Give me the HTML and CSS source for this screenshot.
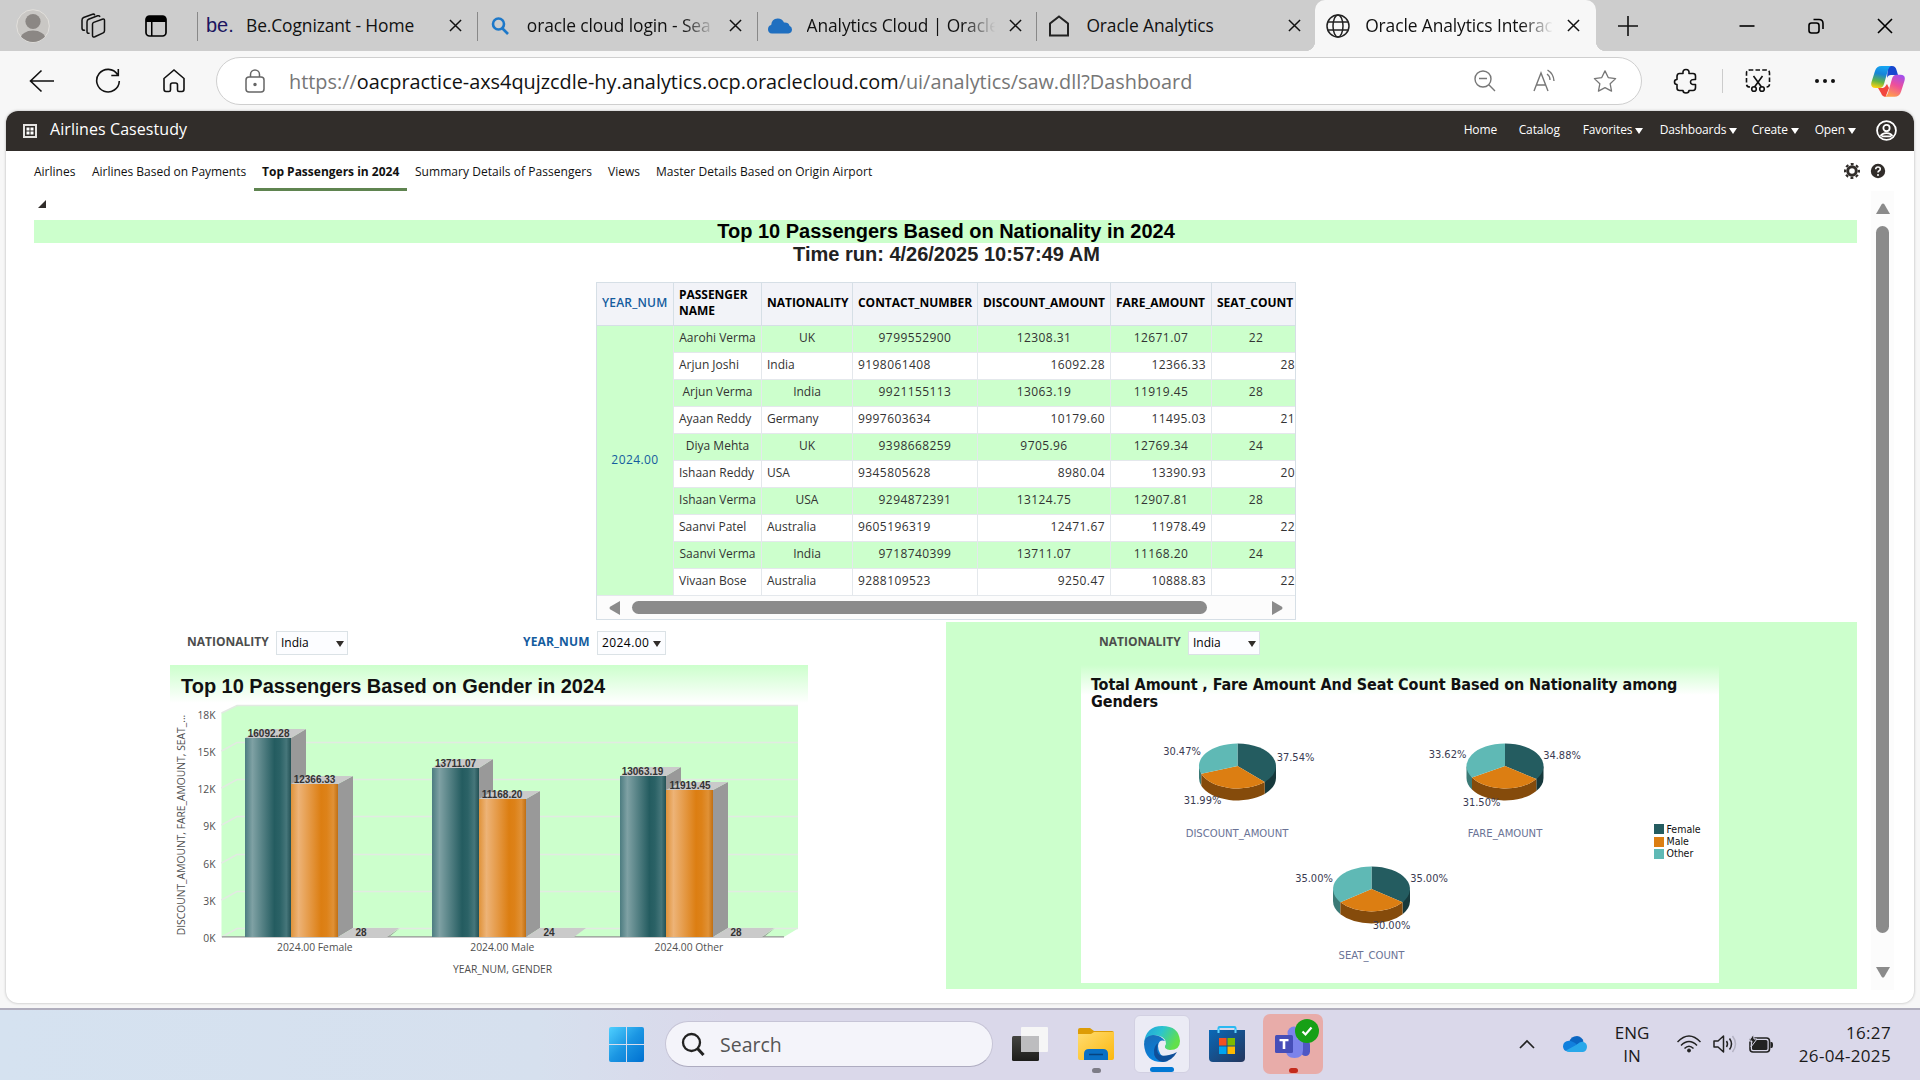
FILE: index.html
```html
<!DOCTYPE html>
<html lang="en">
<head>
<meta charset="utf-8">
<title>Oracle Analytics Interactive Dashboards</title>
<link rel="stylesheet" href="styles.css">
</head>
<body>
<header class="tabstrip">
  <div class="strip-tools">
    <svg class="avatar" viewBox="0 0 34 34"><defs><clipPath id="av"><circle cx="17" cy="17" r="16"/></clipPath></defs><circle cx="17" cy="17" r="16.3" fill="#c9c7c4" stroke="#e2e0dc"/><g clip-path="url(#av)" fill="#8b8784"><circle cx="17" cy="12.5" r="7.6"/><ellipse cx="17" cy="30" rx="12.5" ry="8.5"/></g></svg>
    <svg class="workspaces" viewBox="0 0 26 26" fill="none" stroke="#111" stroke-width="1.5" stroke-linejoin="round" stroke-linecap="round"><path d="M12.5 11.2q0-1.3 1.2-1.8l8.6-3.2q2.2-.6 2.2 1.3v10.3q0 1.5-1.3 2.1l-8.3 3.9q-2.4.9-2.4-1.3zM9 20.3q-2 .2-2-1.9V9q0-2 1.6-2.7l9-3.5q1.600-.5 2.100.6M4.500 17.300q-2.500 0-2.500-2.100V7.200q0-2 1.600-2.700l9-3.200q1.500-.5 2 .5"/></svg>
    <svg class="vtabs" viewBox="0 0 24 24"><rect x="2" y="2" width="20" height="20" rx="3.500" fill="none" stroke="#000" stroke-width="1.700"/><path d="M2 8V5q0-3 3-3h14q3 0 3 3v3zM7 7h1.500v15H7z"/></svg>
  </div>
  <nav class="tabs">
    <div class="tab"><span class="fav be">be.</span><span class="tab-title">Be.Cognizant - Home</span><svg class="x" viewBox="0 0 14 14"><path d="M1 1l12 12M13 1L1 13"/></svg></div>
    <div class="tab"><svg class="fav" viewBox="0 0 24 24" fill="none" stroke="#1d78c9" stroke-width="2.600"><circle cx="10.500" cy="10" r="5.500"/><path d="M14.500 14.500l5.500 5.500"/></svg><span class="tab-title fade">oracle cloud login - Sea</span><svg class="x" viewBox="0 0 14 14"><path d="M1 1l12 12M13 1L1 13"/></svg></div>
    <div class="tab"><svg class="fav" viewBox="0 0 24 24" fill="#1f6fc0"><path d="M4 19.500q-4-.4-4-4.300 0-3.700 3.200-4.300.5-5.900 6.300-6.400 4.500-.2 6.500 4 4.500-.4 5.500 3.200 2.500 1 2.500 3.900 0 3.600-3.600 3.900z"/></svg><span class="tab-title fade">Analytics Cloud | Oracle</span><svg class="x" viewBox="0 0 14 14"><path d="M1 1l12 12M13 1L1 13"/></svg></div>
    <div class="tab"><svg class="fav" viewBox="0 0 24 24" fill="none" stroke="#222" stroke-width="2"><path d="M3 21.500V9.500L12 2.500l9 7v12z"/></svg><span class="tab-title">Oracle Analytics</span><svg class="x" viewBox="0 0 14 14"><path d="M1 1l12 12M13 1L1 13"/></svg></div>
    <div class="tab active"><svg class="fav" viewBox="0 0 24 24" fill="none" stroke="#222" stroke-width="1.500"><circle cx="12" cy="12" r="11"/><ellipse cx="12" cy="12" rx="5" ry="11"/><path d="M2 8h20M2 16h20"/></svg><span class="tab-title fade">Oracle Analytics Interact</span><svg class="x" viewBox="0 0 14 14"><path d="M1 1l12 12M13 1L1 13"/></svg></div>
  </nav>
  <svg class="plus" viewBox="0 0 22 22"><path d="M11 1v20M1 11h20" stroke="#111" stroke-width="1.600"/></svg>
  <div class="winctl">
    <svg viewBox="0 0 16 16"><path d="M.500 8h15"/></svg>
    <svg viewBox="0 0 16 16"><rect x="1" y="5" width="10" height="10" rx="2.500"/><path d="M5.500 1.500h5.500q4 0 4 4V11"/></svg>
    <svg viewBox="0 0 16 16"><path d="M1 1l14 14M15 1L1 15"/></svg>
  </div>
</header>

<div class="toolbar">
  <div class="nav-buttons">
    <svg viewBox="0 0 26 26"><path d="M25 13H1.500M12.500 2.500L1.500 13l11 10.500"/></svg>
    <svg viewBox="0 0 26 26"><path d="M22.500 6.500A11.300 11.300 0 1 0 24.300 13M23.300 1v6.500h-7"/></svg>
    <svg viewBox="0 0 26 26"><path d="M3 10.500L13 2l10 8.500V21q0 2.500-2 2.500h-3q-1.500 0-1.500-1.500v-5q0-2-2-2h-3q-2 0-2 2v5q0 1.500-1.500 1.500H5q-2 0-2-2.500z"/></svg>
  </div>
  <div class="urlbar">
    <svg class="lock" viewBox="0 0 20 24"><rect x="1" y="8" width="18" height="15" rx="3"/><path d="M5.500 8V5.500a4.500 4.500 0 0 1 9 0V8"/><circle cx="10" cy="15.500" r="1" fill="#666"/></svg>
    <span class="url">https://<b>oacpractice-axs4qujzcdle-hy.analytics.ocp.oraclecloud.com</b>/ui/analytics/saw.dll?Dashboard</span>
    <div class="url-icons">
      <svg viewBox="0 0 24 24"><circle cx="10" cy="10" r="8"/><path d="M6 9.500h8M15.800 15.800L22 22"/></svg>
      <svg viewBox="0 0 24 24"><path d="M1 22L8 4l7 18M3.500 16h9M14 5q3 2 3 6M14.500 1q6 3.500 6.500 11"/></svg>
      <svg viewBox="0 0 26 26"><path stroke-linejoin="round" d="M13 2l3.500 7.300 8 1.100-5.900 5.600 1.500 8L13 20.200 5.900 24l1.500-8-5.900-5.600 8-1.100z"/></svg>
    </div>
  </div>
  <div class="ext">
    <svg viewBox="0 0 26 26"><path stroke-linejoin="round" d="M4 8.500q0-3 2.500-3H10q-.5-4 3-4t3 4h4q2.500 0 2.500 2.500v3.500q-5-.5-5 2.500t5 2.500v3q0 3-2.500 3h-4q0 2.500-3 2.500t-3-2.500H6.500Q4 22.500 4 20v-3.500q-2.500 0-2.500-2.500T4 11.500z"/></svg>
    <i class="sep"></i>
    <svg viewBox="0 0 26 26"><path stroke-dasharray="4.500 2.200" d="M5 19q-3.500 0-3.500-3V5Q1.500 2 5 2h16q3.500 0 3.500 3v11q0 3-3.500 3"/><path d="M8.500 8l8 11M17.500 8l-8 11"/><circle cx="9" cy="21" r="2.300"/><circle cx="17" cy="21" r="2.300"/></svg>
    <svg class="dots" viewBox="0 0 26 26"><circle cx="5" cy="13" r="2"/><circle cx="13" cy="13" r="2"/><circle cx="21" cy="13" r="2"/></svg>
    <svg class="copilot" viewBox="0 0 34 31"><defs><linearGradient id="c1" x1=".5" y1="0" x2=".3" y2="1"><stop offset="0" stop-color="#16a5f2"/><stop offset=".35" stop-color="#1684d8"/><stop offset=".7" stop-color="#62b546"/><stop offset="1" stop-color="#ffd110"/></linearGradient><linearGradient id="c2" x1=".8" y1="0" x2=".4" y2="1"><stop offset="0" stop-color="#a04ff0"/><stop offset=".5" stop-color="#ee4f9b"/><stop offset="1" stop-color="#ff9a4f"/></linearGradient></defs><path fill="#1747cf" d="M17 0h4q3.500 0 4.500 4l1.500 5h-7q-3 0-4 3z"/><path fill="#f2463d" d="M7 22h5q2.500-1 4-4l2 4-3.500 9q-3.500-.5-4.500-4z"/><path fill="url(#c1)" d="M10.500 0H20q-2 .8-3 4l-4 14q-1.200 4-4.500 4H4.500Q-1 22 .5 16L4 5Q5.500 0 10.500 0z"/><path fill="url(#c2)" d="M23.500 30.700H14q2.200-.8 3-4l4-14q1.200-4 4.500-4h4q5.500 0 4 6L30 25.700q-1.500 5-6.500 5z"/></svg>
  </div>
</div>

<main class="page">
  <div class="oa-header">
    <svg class="oa-grid" viewBox="0 0 14 14"><path fill="#e6e4e2" fill-rule="evenodd" d="M0 0h14v14H0zM2 2v10h10V2z"/><path fill="#fff" d="M3.500 3.500h3v3h-3zM7.500 3.500h3v3h-3zM3.500 7.500h3v3h-3zM7.500 7.500h3v3h-3z"/></svg>
    <span class="oa-title">Airlines Casestudy</span>
    <nav class="oa-menu"><span class="m-home">Home</span><span class="m-cat">Catalog</span><span class="m-fav">Favorites<i></i></span><span class="m-dash">Dashboards<i></i></span><span class="m-cre">Create<i></i></span><span>Open<i></i></span></nav>
    <svg class="oa-user" viewBox="0 0 20 20" fill="none" stroke="#fff" stroke-width="1.700"><circle cx="10" cy="10" r="9"/><circle cx="10" cy="7.700" r="3"/><path d="M4.500 15.500q1-3 5.500-3t5.500 3M5.500 15.500h9"/></svg>
  </div>
  <div class="dash-tabs">
    <span class="d1">Airlines</span><span class="d2">Airlines Based on Payments</span><span class="d3 current">Top Passengers in 2024</span><span class="d4">Summary Details of Passengers</span><span class="d5">Views</span><span class="d6">Master Details Based on Origin Airport</span>
    <div class="dash-tools">
      <svg viewBox="0 0 16 16"><circle cx="8" cy="8" r="4.300" fill="none" stroke="#312d2a" stroke-width="3"/><circle cx="8" cy="8" r="6.900" fill="none" stroke="#312d2a" stroke-width="2.200" stroke-dasharray="2.900 2.519" stroke-dashoffset="1.450"/></svg>
      <svg viewBox="0 0 16 16"><circle cx="8" cy="8" r="7.200" fill="#312d2a"/><path d="M5.700 6.200q.1-2.200 2.300-2.200t2.300 2q0 1.200-1.200 1.800Q8 8.400 8 9.600" fill="none" stroke="#fff" stroke-width="1.600"/><circle cx="8" cy="12" r="1" fill="#fff"/></svg>
    </div>
  </div>
  <div class="dash-body">
    <div class="canvas">
      <div class="collapse"><svg viewBox="0 0 8 8"><path d="M8 0v8H0z" fill="#312d2a"/></svg></div>
      <h1 class="band">Top 10 Passengers Based on Nationality in 2024</h1>
      <p class="timerun">Time run: 4/26/2025 10:57:49 AM</p>
      <div class="grid-view">
        <table>
          <colgroup><col class="c1"><col class="c2"><col class="c3"><col class="c4"><col class="c5"><col class="c6"><col class="c7"></colgroup>
          <thead><tr><th class="yr">YEAR_NUM</th><th>PASSENGER NAME</th><th>NATIONALITY</th><th>CONTACT_NUMBER</th><th>DISCOUNT_AMOUNT</th><th>FARE_AMOUNT</th><th>SEAT_COUNT</th></tr></thead>
          <tbody>
            <tr><td class="yr" rowspan="10">2024.00</td><td>Aarohi Verma</td><td>UK</td><td>9799552900</td><td>12308.31</td><td>12671.07</td><td>22</td></tr>
            <tr><td>Arjun Joshi</td><td>India</td><td>9198061408</td><td>16092.28</td><td>12366.33</td><td>28</td></tr>
            <tr><td>Arjun Verma</td><td>India</td><td>9921155113</td><td>13063.19</td><td>11919.45</td><td>28</td></tr>
            <tr><td>Ayaan Reddy</td><td>Germany</td><td>9997603634</td><td>10179.60</td><td>11495.03</td><td>21</td></tr>
            <tr><td>Diya Mehta</td><td>UK</td><td>9398668259</td><td>9705.96</td><td>12769.34</td><td>24</td></tr>
            <tr><td>Ishaan Reddy</td><td>USA</td><td>9345805628</td><td>8980.04</td><td>13390.93</td><td>20</td></tr>
            <tr><td>Ishaan Verma</td><td>USA</td><td>9294872391</td><td>13124.75</td><td>12907.81</td><td>28</td></tr>
            <tr><td>Saanvi Patel</td><td>Australia</td><td>9605196319</td><td>12471.67</td><td>11978.49</td><td>22</td></tr>
            <tr><td>Saanvi Verma</td><td>India</td><td>9718740399</td><td>13711.07</td><td>11168.20</td><td>24</td></tr>
            <tr><td>Vivaan Bose</td><td>Australia</td><td>9288109523</td><td>9250.47</td><td>10888.83</td><td>22</td></tr>
          </tbody>
        </table>
        <div class="hscroll"><svg viewBox="0 0 12 14"><path d="M11 0v14L1 8.200Q0 7 1 5.800z"/></svg><i class="hthumb"></i><svg viewBox="0 0 12 14"><path d="M1 0v14l10-5.800Q12 7 11 5.800z"/></svg></div>
      </div>
      <div class="charts">
        <section class="left-view">
          <div class="prompts">
            <span class="lbl">NATIONALITY</span><span class="sel nat">India<i></i></span>
            <span class="lbl year">YEAR_NUM</span><span class="sel num">2024.00<i></i></span>
          </div>
          <div class="bar-chart">
            <h2>Top 10 Passengers Based on Gender in 2024</h2>
            <svg class="bars" viewBox="170 700 638 285">
              <defs>
                <linearGradient id="teal"><stop offset="0" stop-color="#4c7c80"/><stop offset=".16" stop-color="#7fa1a4"/><stop offset=".64" stop-color="#245c60"/><stop offset=".76" stop-color="#2b6266"/><stop offset=".9" stop-color="#46767a"/><stop offset="1" stop-color="#235155"/></linearGradient>
                <linearGradient id="orange"><stop offset="0" stop-color="#e0933a"/><stop offset=".16" stop-color="#edb377"/><stop offset=".64" stop-color="#dc7e12"/><stop offset=".76" stop-color="#dd8219"/><stop offset=".9" stop-color="#e09136"/><stop offset="1" stop-color="#c06f12"/></linearGradient>
              </defs>
              <path fill="#ccffcc" d="M221.500 713L237 705.500H798V928.500L784 937H221.500z"/>
              <g fill="none" stroke="#e2eae2" stroke-width="1.500"><path d="M221.500 713L237 705.500H798"/><path d="M221.500 751L237 742.500H798M221.500 788L237 779.500H798M221.500 825L237 816.500H798M221.500 863L237 854.500H798M221.500 900L237 891.500H798M221.500 937L237 928.500H798"/></g>
              <path stroke="#949494" stroke-width="1.300" d="M222 936.800h562"/>
              <g fill="#999">
                <path d="M291 738l15-9v198l-15 10zM338 784l15-8v152l-15 9zM479 768l14-9v168l-14 10zM526 799l14-8v137l-14 9zM666 776l15-9v160l-15 10zM713 790l15-8v146l-15 9z"/>
                <path d="M387 937l13-9-11 9zM762 937l13-9-11 9z"/>
              </g>
              <g fill="#cacaca">
                <path d="M245 738l15-9h46l-15 9zM291 784l15-8h47l-15 8zM432 768l14-9h47l-14 9zM479 799l14-8h47l-14 8zM620 776l15-9h46l-15 9zM666 790l15-8h47l-15 8z"/>
                <path d="M338 937l15-9h46l-12 9zM526 937l14-9h46l-12 9zM713 937l15-9h46l-12 9z"/>
              </g>
              <g fill="url(#teal)"><rect x="245" y="738" width="46" height="199"/><rect x="432" y="768" width="47" height="169"/><rect x="620" y="776" width="46" height="161"/></g>
              <g fill="url(#orange)"><rect x="291" y="784" width="47" height="153"/><rect x="479" y="799" width="47" height="138"/><rect x="666" y="790" width="47" height="147"/></g>
              <g class="val"><text x="268.600" y="736.500">16092.28</text><text x="314.500" y="782.500">12366.33</text><text x="361" y="935.500">28</text><text x="455.500" y="766.500">13711.07</text><text x="502" y="797.500">11168.20</text><text x="549" y="935.500">24</text><text x="642.500" y="774.500">13063.19</text><text x="690" y="788.500">11919.45</text><text x="736" y="935.500">28</text></g>
              <g class="ytick"><text x="215.500" y="718.500">18K</text><text x="215.500" y="755.500">15K</text><text x="215.500" y="792.500">12K</text><text x="215.500" y="829.500">9K</text><text x="215.500" y="867.500">6K</text><text x="215.500" y="904.500">3K</text><text x="215.500" y="941.500">0K</text></g>
              <g class="xtick"><text x="314.800" y="951">2024.00 Female</text><text x="502.300" y="951">2024.00 Male</text><text x="688.900" y="951">2024.00 Other</text><text x="502.600" y="972.500">YEAR_NUM, GENDER</text><text class="ytitle" transform="translate(185 825) rotate(-90)">DISCOUNT_AMOUNT, FARE_AMOUNT, SEAT_...</text></g>
            </svg>
          </div>
        </section>
        <section class="right-view">
          <div class="prompts"><span class="lbl">NATIONALITY</span><span class="sel nat">India<i></i></span></div>
          <div class="pie-chart">
            <h2>Total Amount , Fare Amount And Seat Count Based on Nationality among Genders</h2>
            <svg class="pies" viewBox="1081 720 637 263">
              <!-- Slice edges follow the share of each gender, clockwise from the top -->
              <g transform="translate(1237.500 766)">
                <path fill="#3b7a76" d="M-38.500 0V12A38.500 22.500 0 0 0 -36.200 19.700V7.700z"/><path fill="#17393c" d="M38.500 0V12A38.500 22.500 0 0 1 27.200 27.900V15.900z"/><path fill="#854b0b" d="M-36.200 7.700A38.500 22.500 0 0 0 27.200 15.900V27.900A38.500 22.500 0 0 1 -36.200 19.700z"/>
                <path fill="#245c60" d="M0 0V-22.500A38.500 22.500 0 0 1 27.200 15.900z"/><path fill="#dc7e12" d="M0 0L27.200 15.900A38.500 22.500 0 0 1 -36.200 7.700z"/><path fill="#5fb9b5" d="M0 0L-36.200 7.700A38.500 22.500 0 0 1 0 -22.500z"/>
              </g>
              <g transform="translate(1505 766)">
                <path fill="#3b7a76" d="M-38.500 0V12A38.500 22.500 0 0 0 -33 23.600V11.600z"/><path fill="#17393c" d="M38.500 0V12A38.500 22.500 0 0 1 31.300 25.100V13.100z"/><path fill="#854b0b" d="M-33 11.600A38.500 22.500 0 0 0 31.300 13.100V25.100A38.500 22.500 0 0 1 -33 23.600z"/>
                <path fill="#245c60" d="M0 0V-22.500A38.500 22.500 0 0 1 31.300 13.100z"/><path fill="#dc7e12" d="M0 0L31.300 13.100A38.500 22.500 0 0 1 -33 11.600z"/><path fill="#5fb9b5" d="M0 0L-33 11.600A38.500 22.500 0 0 1 0 -22.500z"/>
              </g>
              <g transform="translate(1371.500 889)">
                <path fill="#3b7a76" d="M-38.500 0V12A38.500 22.500 0 0 0 -31.100 25.200V13.200z"/><path fill="#17393c" d="M38.500 0V12A38.500 22.500 0 0 1 31.100 25.200V13.200z"/><path fill="#854b0b" d="M-31.100 13.200A38.500 22.500 0 0 0 31.100 13.200V25.200A38.500 22.500 0 0 1 -31.100 25.200z"/>
                <path fill="#245c60" d="M0 0V-22.500A38.500 22.500 0 0 1 31.100 13.200z"/><path fill="#dc7e12" d="M0 0L31.100 13.200A38.500 22.500 0 0 1 -31.100 13.200z"/><path fill="#5fb9b5" d="M0 0L-31.100 13.200A38.500 22.500 0 0 1 0 -22.500z"/>
              </g>
              <g class="pct"><text x="1182" y="755">30.47%</text><text x="1295.500" y="761">37.54%</text><text x="1202.500" y="804">31.99%</text><text x="1447.500" y="758">33.62%</text><text x="1562" y="759">34.88%</text><text x="1481.500" y="806">31.50%</text><text x="1314" y="882">35.00%</text><text x="1429" y="882">35.00%</text><text x="1391.500" y="929">30.00%</text></g>
              <g class="pname"><text x="1237" y="837">DISCOUNT_AMOUNT</text><text x="1505" y="837">FARE_AMOUNT</text><text x="1371.500" y="959">SEAT_COUNT</text></g>
              <path fill="#245c60" d="M1654 824h10v10h-10z"/><path fill="#dc7e12" d="M1654 837h10v10h-10z"/><path fill="#5fb9b5" d="M1654 849h10v10h-10z"/>
              <g class="leg"><text x="1666.500" y="833">Female</text><text x="1666.500" y="845">Male</text><text x="1666.500" y="857">Other</text></g>
            </svg>
          </div>
        </section>
      </div>
    </div>
    <div class="vscroll"><svg viewBox="0 0 14 12"><path d="M0 11h14L8.200 1Q7 0 5.800 1z"/></svg><i class="vthumb"></i><svg viewBox="0 0 14 12"><path d="M0 1h14L8.200 11Q7 12 5.800 11z"/></svg></div>
  </div>
</main>

<footer class="taskbar">
  <svg class="start" viewBox="0 0 35 35"><defs><linearGradient id="w" x1="0" y1="0" x2="1" y2="1"><stop offset="0" stop-color="#4fd0ff"/><stop offset=".5" stop-color="#1b96e3"/><stop offset="1" stop-color="#0070d0"/></linearGradient></defs><path fill="url(#w)" d="M2 0h15v17H0V2q0-2 2-2zM18 0h15q2 0 2 2v15H18zM0 18h17v17H2q-2 0-2-2zM18 18h17v15q0 2-2 2H18z"/></svg>
  <div class="search"><svg viewBox="0 0 24 24" fill="none" stroke="#222" stroke-width="2.300"><circle cx="10.500" cy="10.500" r="8.500"/><path d="M16.500 16.500l6 6.500" stroke-width="3"/></svg><span>Search</span></div>
  <div class="apps">
    <svg class="app" viewBox="0 0 36 36"><defs><linearGradient id="tv" x1="0" y1="0" x2="0" y2="1"><stop offset="0" stop-color="#444441"/><stop offset="1" stop-color="#1d1d1b"/></linearGradient></defs><rect x="0" y="10" width="27" height="25" rx="1.500" fill="url(#tv)"/><rect x="9" y="1" width="27" height="25" rx="1" fill="#f6f6f6"/><path fill="#bdbdbf" d="M9 10h18v16H9z"/></svg>
    <div class="tile"><svg class="app" viewBox="0 0 36 36"><defs><linearGradient id="fo" x1="0" y1="0" x2="1" y2="1"><stop offset="0" stop-color="#ffdc70"/><stop offset="1" stop-color="#fcb80f"/></linearGradient></defs><path fill="#dd9c06" d="M0 8V4q0-2 2-2h10l4 3h18q2 0 2 2v3H0z"/><path fill="url(#fo)" d="M0 8h13l3-2h20v26q0 2-2 2H2q-2 0-2-2z"/><path fill="#0a70c4" d="M6 34v-6q0-5 5-5h14q5 0 5 5v6z"/><path stroke="#07437f" stroke-width="1.500" d="M11 28.500h14"/></svg><i class="run"></i></div>
    <div class="tile edge"><svg class="app" viewBox="0 0 36 36"><defs><linearGradient id="e1" x1="0" y1="0" x2="1" y2=".4"><stop offset="0" stop-color="#209fde"/><stop offset=".5" stop-color="#2cc4ce"/><stop offset="1" stop-color="#62e04b"/></linearGradient><linearGradient id="e2" x1="0" y1="0" x2=".4" y2="1"><stop offset="0" stop-color="#1c6bb5"/><stop offset="1" stop-color="#0684df"/></linearGradient></defs><path fill="url(#e1)" d="M0 17Q2 0 18 0q17 0 18 15 0 9-10 9-6-1-5-4 3-5-3-9-9-5-18 6z"/><path fill="url(#e2)" d="M0 18Q0 10 9 9q8 0 12 6-6-2-7 5 0 9 10 15-3 1-6 1Q1 36 0 18z"/><path fill="#0f4f99" d="M14 17q-4 16 11 12 5-1 8-3-5 9-14 10-10-2-9-12 1-5 4-7z"/></svg><i class="run"></i></div>
    <svg class="app store" viewBox="0 0 36 36"><defs><linearGradient id="st" x1="0" y1="0" x2="1" y2="1"><stop offset="0" stop-color="#0a69b8"/><stop offset="1" stop-color="#24355c"/></linearGradient></defs><path fill="none" stroke="#2bb9f2" stroke-width="2" d="M9.500 6V2q0-1 1-1h15q1 0 1 1v4"/><path fill="url(#st)" d="M0 4h36v28q0 4-4 4H4q-4 0-4-4z"/><path fill="none" stroke="#5cd3ff" stroke-width="2" d="M9.500 3v4M26.500 3v4"/><path fill="#f25022" d="M10 12h7.500v7.500H10z"/><path fill="#7fba00" d="M18.500 12H26v7.500h-7.500z"/><path fill="#00a4ef" d="M10 20.500h7.500V28H10z"/><path fill="#ffb900" d="M18.500 20.500H26V28h-7.500z"/></svg>
    <div class="tile teams"><svg class="app" viewBox="0 0 36 36"><circle cx="19" cy="7" r="6.500" fill="#7b83eb"/><rect x="26" y="14" width="9" height="16" rx="4.500" fill="#4f57c4"/><path fill="#7b83eb" d="M11 13h17v11q0 8-8.500 8T11 24z"/><rect x="0" y="9" width="18" height="18" rx="1.500" fill="#464eb8"/><path fill="#fff" d="M4.500 13h9v2.300h-3.200V23H7.700v-7.700H4.500z"/></svg><svg class="badge" viewBox="0 0 24 24"><circle cx="12" cy="12" r="12" fill="#16a016"/><path d="M7.500 12.500l3 3 6-7" fill="none" stroke="#fff" stroke-width="2.200"/></svg><i class="run"></i></div>
  </div>
  <div class="tray">
    <svg class="chev" viewBox="0 0 16 10"><path d="M1 9l7-7 7 7" fill="none" stroke="#222" stroke-width="1.700"/></svg>
    <svg class="drive" viewBox="0 0 24 16"><path fill="#0a66c2" d="M6 6q2-6 8-6 5 .5 6.500 5.500L12 10z"/><path fill="#1180dd" d="M5 15.500q-5-.5-5-5.300Q.5 5 6 4.800q3 0 8 3.700L8 15z"/><path fill="#28a8ea" d="M3 14.500L14 8.500q3-3.300 6.500-2.500Q24 7.200 24 11q-.5 4.500-4 4.900H6q-2 0-3-1.400z"/></svg>
    <div class="lang"><span>ENG</span><span>IN</span></div>
    <svg class="wifi" viewBox="0 0 24 18" fill="none" stroke="#222" stroke-width="1.500"><path d="M.500 7Q12-5 23.500 7M4 10.500q8-8 16 0M7.500 13.500q4.500-4.500 9 0"/><circle cx="12" cy="15.500" r="1.500" fill="#222" stroke-width="1"/></svg>
    <svg class="vol" viewBox="0 0 24 20" fill="none" stroke="#222" stroke-width="1.500"><path stroke-linejoin="round" d="M1 7v6h4l5.500 5V2L5 7zM13.500 7q2 3 0 6M16.500 4.500q4 5.500 0 11"/><path stroke="#b4b2c2" d="M19.500 2q6 8 0 16"/></svg>
    <svg class="bat" viewBox="0 0 24 20"><rect x="1" y="4" width="19.500" height="14" rx="3" fill="none" stroke="#222" stroke-width="1.600"/><rect x="3" y="6" width="15.500" height="10" rx="1.500" fill="#222"/><path fill="#222" d="M21.500 8h1q1.500 0 1.500 3t-1.500 3h-1z"/><path fill="#222" stroke="#dad8ea" d="M4.500 0L0 7h3l-1 6 6-8H5z"/></svg>
    <div class="clock"><span>16:27</span><span>26-04-2025</span></div>
  </div>
</footer>
</body>
</html>
```

FILE: styles.css
```css
* { box-sizing: border-box; }
body { margin: 0; height: 1080px; overflow: hidden; display: flex; flex-direction: column; background: #f7f7f7; font-family: "Open Sans", "Noto Sans", sans-serif; color: #111; }
svg { display: block; flex: none; }
i { display: inline-block; flex: none; }

/* browser tabs */
.tabstrip { height: 51px; flex: none; display: flex; align-items: center; background: #cdcdcd; }
.strip-tools { width: 197px; flex: none; display: flex; align-items: center; padding-left: 16px; }
.avatar { width: 34px; height: 34px; }
.workspaces { width: 26px; height: 26px; margin-left: 30px; }
.vtabs { width: 24px; height: 24px; margin-left: 38px; }
.tabs { display: flex; width: 1399px; flex: none; }
.tab { width: 280px; height: 51px; display: flex; align-items: center; padding-left: 11px; position: relative; }
.tab::before { content: ""; position: absolute; left: 0; top: 12px; width: 1px; height: 29px; background: #888; }
.tab:nth-child(4) { width: 279px; }
.fav { width: 24px; height: 24px; flex: none; margin-right: 15px; }
.be { font: 20px/22px "Liberation Sans", sans-serif; color: #1c1560; width: 30px; margin-right: 10px; }
.tab-title { width: 190px; flex: none; font-size: 17.4px; letter-spacing: -0.1px; white-space: nowrap; padding-bottom: 1px; }
.be + .tab-title { width: 202px; }
.fade { mask-image: linear-gradient(90deg, #000 82%, transparent 99%); }
.tab:first-child { padding-left: 9px; }
.x { width: 13px; height: 13px; margin-left: 12px; stroke: #111; stroke-width: 1.6; }
.be ~ .x { margin-left: 1px; }
.tab.active { width: 281px; background: #f7f7f7; border-radius: 10px 10px 0 0; }
.tab.active::before { left: -10px; top: 41px; width: 10px; height: 10px; background: radial-gradient(circle at 0 0, transparent 10px, #f7f7f7 10.500px); }
.tab.active::after { content: ""; position: absolute; right: -10px; top: 41px; width: 10px; height: 10px; background: radial-gradient(circle at 100% 0, transparent 10px, #f7f7f7 10.500px); }
.plus { width: 22px; height: 22px; margin-left: 21px; }
.winctl { display: flex; gap: 53px; margin-left: auto; padding-right: 27px; }
.winctl svg { width: 16px; height: 16px; fill: none; stroke: #000; stroke-width: 1.6; }

/* address row */
.toolbar { height: 60px; flex: none; display: flex; align-items: center; }
.nav-buttons { width: 216px; display: flex; gap: 40px; padding-left: 29px; flex: none; }
.nav-buttons svg { width: 26px; height: 26px; fill: none; stroke: #111; stroke-width: 1.6; }
.urlbar { width: 1426px; height: 48px; flex: none; display: flex; align-items: center; border: 1.500px solid #cfcfcf; border-radius: 24px; background: #fff; padding-left: 28px; }
.lock { width: 20px; height: 24px; fill: none; stroke: #666; stroke-width: 1.5; }
.url { margin-left: 24px; font-size: 19.87px; color: #767676; white-space: nowrap; }
.url b { font-weight: 400; color: #111; }
.url-icons { margin-left: auto; display: flex; align-items: center; gap: 36px; padding-right: 24px; }
.url-icons svg { width: 24px; height: 24px; fill: none; stroke: #777; stroke-width: 1.4; }
.ext { flex: 1; display: flex; align-items: center; padding-left: 31px; }
.ext svg { width: 26px; height: 26px; fill: none; stroke: #111; stroke-width: 1.6; }
.sep { width: 1px; height: 24px; background: #ccc; margin: 0 22px 0 23px; }
.ext .dots { margin-left: 41px; fill: #111; stroke: none; }
.ext .copilot { width: 34px; height: 31px; margin-left: 33px; stroke: none; }

/* dashboard page */
.page { width: 1908px; height: 892px; margin-left: 6px; flex: none; display: flex; flex-direction: column; background: #fff; border-radius: 12px; overflow: hidden; box-shadow: 0 0 3px rgba(0, 0, 0, .28); }
.oa-header { height: 40px; flex: none; display: flex; align-items: center; padding: 0 17px; background: #312d2a; color: #fff; }
.oa-grid { width: 14px; height: 14px; }
.oa-title { margin-left: 13px; font-size: 16px; letter-spacing: .07px; margin-top: -4px; }
.oa-menu { margin-left: auto; display: flex; font-size: 12px; letter-spacing: -0.1px; white-space: nowrap; margin-top: -3px; }
.oa-menu i { border: 4px solid transparent; border-top: 6px solid #fff; border-bottom: 0; margin-left: 3px; vertical-align: 0; }
.m-home { width: 55px; }
.m-cat { width: 64px; }
.m-fav { width: 77px; }
.m-dash { width: 92px; }
.m-cre { width: 63px; }
.oa-user { width: 21px; height: 21px; margin-left: 20px; margin-top: -1px; }
.dash-tabs { height: 40px; flex: none; display: flex; font-size: 12px; line-height: 41px; padding-left: 28px; white-space: nowrap; }
.d1 { width: 58px; }
.d2 { width: 162px; letter-spacing: -0.02px; }
.d3 { width: 153px; padding-left: 8px; margin-right: 8px; border-bottom: 3px solid #5f8450; font-weight: 700; }
.d4 { width: 193px; letter-spacing: .04px; }
.d5 { width: 48px; }
.d6 { letter-spacing: .03px; }
.dash-tools { margin-left: auto; display: flex; gap: 10px; padding: 12px 28px 0 0; }
.dash-tools svg { width: 16px; height: 16px; }
.dash-body { flex: 1; display: flex; }
.canvas { width: 1823px; margin-left: 28px; flex: none; }
.collapse { height: 29px; padding: 9px 0 0 4px; }
.collapse svg { width: 8px; height: 8px; }
.band { margin: 0; height: 23px; background: #ccffcc; font: 700 20px/23px "Liberation Sans", sans-serif; text-align: center; color: #000; padding-left: 1px; }
.timerun { margin: 0; font: 700 20px/23px "Liberation Sans", sans-serif; text-align: center; color: #222; padding-left: 2px; }

/* passenger table */
.grid-view { width: 700px; margin: 16px 0 0 562px; border: 1px solid #d6dfe6; overflow: hidden; }
table { border-collapse: separate; border-spacing: 0; table-layout: fixed; width: 704px; font-size: 12px; color: #333; }
.c1 { width: 77px; } .c2 { width: 88px; } .c3 { width: 91px; } .c4 { width: 125px; } .c5 { width: 133px; } .c6 { width: 101px; } .c7 { width: 89px; }
th { height: 43px; padding: 0 4px 2px 5px; text-align: left; font-weight: 700; line-height: 16px; background: #f2f3f8; color: #000; border-right: 1px solid #d6dfe6; border-bottom: 1px solid #d6dfe6; white-space: nowrap; letter-spacing: -0.03px; }
th:nth-child(2) { white-space: normal; }
th.yr { color: #145c9e; font-weight: 600; letter-spacing: .2px; }
td { height: 27px; padding: 0 5px 2px; line-height: 16px; border-right: 1px solid #e4e8ec; border-bottom: 1px solid #e4e8ec; white-space: nowrap; }
td:nth-last-child(-n+4) { letter-spacing: .42px; }
td:nth-last-child(-n+3) { text-align: right; }
tbody tr:nth-child(odd) td { background: #ccffcc; text-align: center; }
tbody td.yr { color: #145c9e; letter-spacing: .42px; }
th:last-child, td:last-child { padding-right: 5px; }
.hscroll { height: 23px; display: flex; align-items: center; padding: 0 12px 0 12px; background: #fcfcfc; }
.hscroll svg { width: 12px; height: 14px; fill: #8b8b8b; }
.hthumb { width: 575px; height: 13px; border-radius: 7px; background: #8b8b8b; margin: 0 auto 0 11px; }

/* chart row */
.charts { display: flex; height: 367px; margin-top: 2px; }
.left-view { width: 912px; }
.right-view { width: 911px; background: #ccffcc; padding-left: 135px; }
.prompts { height: 43px; display: flex; align-items: flex-start; padding-top: 9px; font-size: 12px; line-height: 22px; }
.left-view .prompts { padding-left: 153px; }
.right-view .prompts { padding-left: 18px; }
.lbl { width: 89px; font-weight: 700; color: #4d4d4d; }
.lbl.year { width: 74px; margin-left: 175px; color: #145c9e; letter-spacing: .15px; }
.sel { height: 24px; display: flex; align-items: center; justify-content: space-between; padding: 0 4px; border: 1px solid #dbe2e6; background: #fcfdff; color: #000; padding-bottom: 1px; }
.sel i { border: 4px solid transparent; border-top: 6px solid #312d2a; border-bottom: 0; margin-top: 3px; }
.nat { width: 72px; }
.num { width: 69px; letter-spacing: .42px; }
.nat i { margin-right: -1px; }
.bar-chart { width: 638px; margin-left: 136px; background: linear-gradient(#ccffcc, #fff 38px); }
.bar-chart h2 { margin: 0; height: 35px; padding: 9px 0 0 11px; font: 700 20px/24px "Liberation Sans", sans-serif; letter-spacing: -0.03px; }
.bars { width: 638px; height: 285px; }
.bars text { font-family: "Open Sans", sans-serif; font-size: 10px; fill: #4f4f4f; }
.bars .val text { font-family: "Liberation Sans", sans-serif; font-weight: 700; fill: #333; text-anchor: middle; }
.bars .ytick text { text-anchor: end; font-size: 10.3px; }
.bars .xtick text { text-anchor: middle; font-size: 10.3px; }
.pie-chart { width: 638px; height: 318px; background: linear-gradient(#ccffcc, #fff 30px); }
.pie-chart h2 { margin: 0; height: 55px; padding: 11px 0 0 10px; font: 700 16px/17px "DejaVu Sans Condensed", "DejaVu Sans", sans-serif; letter-spacing: -0.09px; color: #111; }
.pies { width: 637px; height: 263px; }
.pies text { font-family: "DejaVu Sans Condensed", "DejaVu Sans", sans-serif; font-size: 11px; text-anchor: middle; }
.pct text { fill: #3a3a52; }
.pies .pname text { fill: #6a7396; font-size: 11.2px; }
.pies .leg text { text-anchor: start; fill: #111; font-size: 10.500px; }
.vscroll { width: 23px; height: 799px; margin-left: 14px; background: #fcfcfc; display: flex; flex-direction: column; align-items: center; padding-top: 12px; }
.vscroll svg { width: 14px; height: 12px; fill: #8b8b8b; }
.vthumb { width: 13px; height: 707px; border-radius: 7px; background: #8b8b8b; margin: 11px 0 33px; }

/* taskbar */
.taskbar { height: 72px; margin-top: 5px; flex: none; display: flex; align-items: center; border-top: 2px solid #b0aebd; padding-bottom: 2px; background: linear-gradient(90deg, #d5e2f0 0, #d6e0ee 28%, #dad8ea 38%, #dad8ea 100%); }
.start { width: 35px; height: 35px; margin-left: 609px; }
.search { width: 328px; height: 46px; margin-left: 21px; display: flex; align-items: center; padding-left: 15px; border: 1.500px solid #c6c4d6; border-bottom-color: #aeacc0; border-radius: 23px; background: #f4f4fa; font-size: 19.5px; color: #555; flex: none; }
.search svg { width: 24px; height: 24px; margin-right: 15px; }
.apps { display: flex; align-items: center; margin-left: 19px; }
.app { width: 36px; height: 36px; }
.tile { width: 60px; height: 60px; position: relative; display: flex; align-items: center; justify-content: center; margin-left: 18px; border-radius: 7px; }
.tile .run { position: absolute; bottom: 1px; left: 25.5px; width: 9px; height: 5px; border-radius: 3px; background: #7d7c87; }
.tile.edge { width: 56px; height: 58px; margin-left: 8px; background: #ebebf5; border: 1px solid #d2d0e2; border-radius: 6px; }
.edge .run { left: 15px; width: 24px; bottom: 0; background: #0078d4; }
.app.store { margin-left: 19px; }
.tile.teams { background: #e8aca9; }
.teams .run { background: #c42b1c; }
.teams .app { margin-right: 1px; }
.badge { position: absolute; right: 4px; top: 5px; width: 24px; height: 24px; }
.tray { margin-left: auto; display: flex; align-items: center; padding-right: 29px; font-size: 17px; line-height: 23px; color: #1a1a1a; }
.chev { width: 16px; height: 10px; }
.drive { width: 24px; height: 16px; margin-left: 28px; }
.lang { width: 38px; margin-left: 26px; display: flex; flex-direction: column; text-align: center; }
.wifi { width: 24px; height: 18px; margin-left: 26px; }
.vol { width: 24px; height: 20px; margin-left: 12px; }
.bat { width: 24px; height: 20px; margin-left: 12px; }
.clock { width: 93px; margin-left: 25px; display: flex; flex-direction: column; align-items: flex-end; white-space: nowrap; letter-spacing: .35px; }
```
